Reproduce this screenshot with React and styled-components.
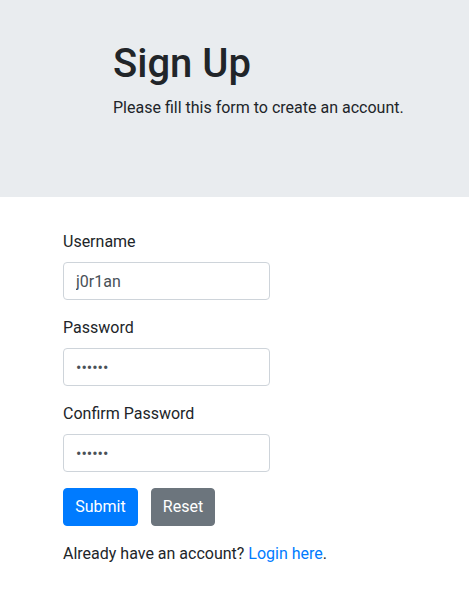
import React from "react";
import styled, { createGlobalStyle } from "styled-components";

const GlobalStyle = createGlobalStyle`
  *, *::before, *::after { box-sizing: border-box; }
  body {
    margin: 0;
    background: #fff;
    color: #212529;
    font-family: Roboto, "Liberation Sans", sans-serif;
    font-size: 16px;
    line-height: 1.5;
  }
`;

const Jumbotron = styled.header`
  background: #e9ecef;
  padding: 40px 0 62px 113px;
  margin-bottom: 33px;
`;

const Title = styled.h1`
  margin: 0 0 8px;
  font-size: 40px;
  font-weight: 500;
  line-height: 48px;
  color: #212529;
`;

const Lead = styled.p`
  margin: 0 0 15px;
  font-size: 16px;
  line-height: 24px;
`;

const Form = styled.form`
  margin-left: 63px;
  width: 207px;
`;

const Group = styled.div`
  margin-bottom: 16px;
`;

const Label = styled.label`
  display: block;
  margin-bottom: 8px;
  line-height: 24px;
  color: #212529;
`;

const Input = styled.input`
  display: block;
  width: 100%;
  height: 38px;
  padding: 6px 12px;
  font-family: inherit;
  font-size: 16px;
  line-height: 24px;
  color: #495057;
  background: #fff;
  border: 1px solid #ced4da;
  border-radius: 4px;
  outline: none;
`;

const Actions = styled.div`
  display: flex;
  gap: 13px;
  margin-bottom: 16px;
`;

const Button = styled.button`
  width: ${(p) => p.$width}px;
  height: 38px;
  padding: 6px 0;
  font-family: inherit;
  font-size: 16px;
  line-height: 24px;
  text-align: center;
  color: #fff;
  background: ${(p) => (p.$variant === "secondary" ? "#6c757d" : "#007bff")};
  border: 1px solid ${(p) => (p.$variant === "secondary" ? "#6c757d" : "#007bff")};
  border-radius: 4px;
  cursor: pointer;
`;

const Note = styled.p`
  margin: 0;
  line-height: 24px;
  white-space: nowrap;
`;

const Link = styled.a`
  color: #007bff;
  text-decoration: none;
`;

export default function App() {
  return (
    <>
      <GlobalStyle />
      <Jumbotron>
        <Title>Sign Up</Title>
        <Lead>Please fill this form to create an account.</Lead>
      </Jumbotron>
      <Form onSubmit={(e) => e.preventDefault()}>
        <Group>
          <Label>Username</Label>
          <Input type="text" defaultValue="j0r1an" />
        </Group>
        <Group>
          <Label>Password</Label>
          <Input type="password" defaultValue="123456" />
        </Group>
        <Group>
          <Label>Confirm Password</Label>
          <Input type="password" defaultValue="123456" />
        </Group>
        <Actions>
          <Button type="submit" $width={75}>Submit</Button>
          <Button type="reset" $variant="secondary" $width={64}>Reset</Button>
        </Actions>
        <Note>
          Already have an account? <Link href="#">Login here</Link>.
        </Note>
      </Form>
    </>
  );
}
